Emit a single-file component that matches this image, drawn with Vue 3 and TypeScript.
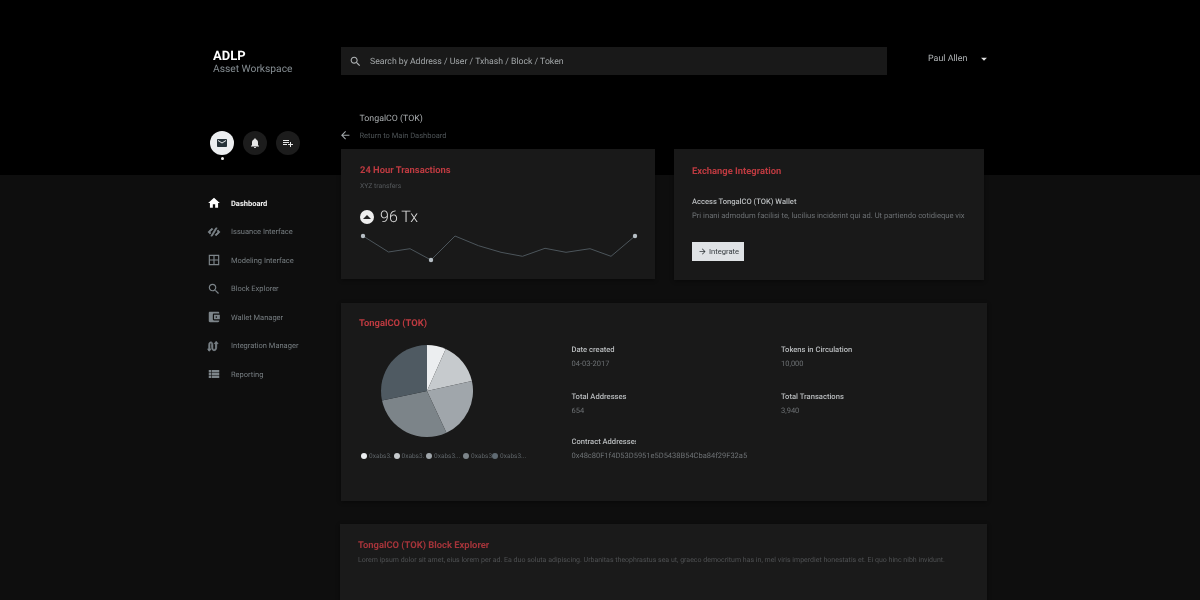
<script setup lang="ts">
const icons: Record<string, string> = {
  search: "M15.5 14h-.79l-.28-.27C15.41 12.59 16 11.11 16 9.5 16 5.91 13.09 3 9.5 3S3 5.91 3 9.5 5.91 16 9.5 16c1.61 0 3.09-.59 4.23-1.57l.27.28v.79l5 4.99L20.49 19l-4.99-5zm-6 0C7.01 14 5 11.99 5 9.5S7.01 5 9.5 5 14 7.01 14 9.5 11.99 14 9.5 14z",
  mail: "M20 4H4c-1.1 0-1.99.9-1.99 2L2 18c0 1.1.9 2 2 2h16c1.1 0 2-.9 2-2V6c0-1.1-.9-2-2-2zm0 4l-8 5-8-5V6l8 5 8-5v2z",
  bell: "M12 22c1.1 0 2-.9 2-2h-4c0 1.1.89 2 2 2zm6-6v-5c0-3.07-1.64-5.64-4.5-6.32V4c0-.83-.67-1.5-1.5-1.5s-1.5.67-1.5 1.5v.68C7.63 5.36 6 7.92 6 11v5l-2 2v1h16v-1l-2-2z",
  playlist: "M14 10H2v2h12v-2zm0-4H2v2h12V6zm4 8v-4h-2v4h-4v2h4v4h2v-4h4v-2h-4zM2 16h8v-2H2v2z",
  home: "M10 20v-6h4v6h5v-8h3L12 3 2 12h3v8z",
  issuance: "M8.5 5.5 2.8 10.6c-.9.9-.9 2 0 2.8L5 15.5l1.6-1.7L4.8 12l5.3-4.8zM15.5 18.5l5.7-5.1c.9-.9.9-2 0-2.8L19 8.5l-1.6 1.7 1.8 1.8-5.3 4.8zM15 5h2.4L9 19H6.6z",
  grid: "M3 3v18h18V3H3zm8 16H5v-6h6v6zm0-8H5V5h6v6zm8 8h-6v-6h6v6zm0-8h-6V5h6v6z",
  wallet: "M21 18v1c0 1.1-.9 2-2 2H5c-1.11 0-2-.9-2-2V5c0-1.1.89-2 2-2h14c1.1 0 2 .9 2 2v1h-9c-1.11 0-2 .9-2 2v8c0 1.1.89 2 2 2h9zm-9-2h10V8H12v8zm4-2.5c-.83 0-1.5-.67-1.5-1.5s.67-1.5 1.5-1.5 1.5.67 1.5 1.5-.67 1.5-1.5 1.5z",
  integration: "M3 20V9.5C3 6.5 4.5 5 6.5 5S10 6.5 10 9.5v5c0 2 .7 3.5 2.2 3.5s2.3-1.5 2.3-3.5V8h-2l3.2-4 3.3 4h-2.4v6.5c0 3.5-1.8 5.5-4.4 5.5S8 18 8 14.5v-5C8 8 7.5 7 6.5 7S5 8 5 9.5V17h2l-3 4-3-4h2z",
  list: "M3 14h4v-4H3v4zm0 5h4v-4H3v4zM3 9h4V5H3v4zm5 5h13v-4H8v4zm0 5h13v-4H8v4zM8 5v4h13V5H8z",
  back: "M20 11H7.83l5.59-5.59L12 4l-8 8 8 8 1.41-1.41L7.83 13H20v-2z",
  forward: "M12 4l-1.41 1.41L16.17 11H4v2h12.17l-5.58 5.59L12 20l8-8z",
  drop: "M7 10l5 5 5-5z",
}

const actions = [
  { icon: "mail", active: true },
  { icon: "bell", active: false },
  { icon: "playlist", active: false },
]

const navItems = [
  { label: "Dashboard", icon: "home", active: true, heavy: false },
  { label: "Issuance Interface", icon: "issuance", active: false, heavy: true },
  { label: "Modeling Interface", icon: "grid", active: false, heavy: false },
  { label: "Block Explorer", icon: "search", active: false, heavy: false },
  { label: "Wallet Manager", icon: "wallet", active: false, heavy: false },
  { label: "Integration Manager", icon: "integration", active: false, heavy: true },
  { label: "Reporting", icon: "list", active: false, heavy: false },
]

const sparkPoints: [number, number][] = [
  [3, 3], [28.5, 19], [50, 15.7], [71, 27], [95, 3], [118.5, 12.7], [141, 19.3],
  [162.5, 23.3], [185, 15.3], [206, 19.3], [230, 15.7], [251, 23.3], [275, 3],
]
const sparkLine = sparkPoints.map((p) => p.join(",")).join(" ")
const sparkDots = [sparkPoints[0], sparkPoints[3], sparkPoints[12]]

// pie angles in degrees, clockwise from twelve o'clock
const slices = [
  { from: 0, to: 24, color: "#eceef0" },
  { from: 24, to: 77.5, color: "#c6cacd" },
  { from: 77.5, to: 155, color: "#a0a6ab" },
  { from: 155, to: 258, color: "#7c8489" },
  { from: 258, to: 360, color: "#4f5a62" },
]

const slicePath = (from: number, to: number) => {
  const r = 46
  const pt = (a: number) => {
    const rad = (a * Math.PI) / 180
    return `${(r + r * Math.sin(rad)).toFixed(2)} ${(r - r * Math.cos(rad)).toFixed(2)}`
  }
  return `M${r} ${r}L${pt(from)}A${r} ${r} 0 ${to - from > 180 ? 1 : 0} 1 ${pt(to)}Z`
}

const legend = [
  { label: "0xabs3.", color: "#eceef0" },
  { label: "0xabs3.", color: "#c6cacd" },
  { label: "0xabs3...", color: "#a0a6ab" },
  { label: "0xabs3", color: "#7c8489" },
  { label: "0xabs3...", color: "#5f6a72" },
]

const details = [
  { label: "Date created", value: "04-03-2017" },
  { label: "Tokens in Circulation", value: "10,000" },
  { label: "Total Addresses", value: "654" },
  { label: "Total Transactions", value: "3,940" },
]
</script>

<template>
  <div class="page">
    <aside class="sidebar">
      <div class="brand">
        <div class="brand-name">ADLP</div>
        <div class="brand-sub">Asset Workspace</div>
      </div>
      <div class="actions">
        <button v-for="a in actions" :key="a.icon" class="action" :class="{ active: a.active }">
          <svg viewBox="0 0 24 24" width="12" height="12"><path :d="icons[a.icon]" /></svg>
        </button>
      </div>
      <nav class="nav">
        <a v-for="item in navItems" :key="item.label" class="nav-item" :class="{ active: item.active }">
          <svg :class="{ heavy: item.heavy }" viewBox="0 0 24 24" width="14" height="14"><path :d="icons[item.icon]" /></svg>
          <span>{{ item.label }}</span>
        </a>
      </nav>
    </aside>

    <main class="main">
      <header class="topbar">
        <div class="search">
          <svg viewBox="0 0 24 24" width="13" height="13"><path :d="icons.search" /></svg>
          <span>Search by Address / User / Txhash / Block / Token</span>
        </div>
        <div class="user">
          <span>Paul Allen</span>
          <svg viewBox="0 0 24 24" width="14" height="14"><path :d="icons.drop" /></svg>
        </div>
      </header>

      <div class="crumb">
        <svg viewBox="0 0 24 24" width="12.5" height="12.5"><path :d="icons.back" /></svg>
        <div class="crumb-text">
          <div class="crumb-title">TongalCO (TOK)</div>
          <div class="crumb-sub">Return to Main Dashboard</div>
        </div>
      </div>

      <div class="row">
        <section class="card tx-card">
          <h2 class="card-title">24 Hour Transactions</h2>
          <p class="muted">XYZ transfers</p>
          <div class="stat">
            <span class="stat-icon"><i></i></span>
            <span class="stat-value">96 Tx</span>
          </div>
          <svg class="spark" viewBox="0 0 278 30" width="278" height="30">
            <polyline :points="sparkLine" fill="none" stroke="#4c555b" stroke-width="1" />
            <circle v-for="d in sparkDots" :key="d[0]" :cx="d[0]" :cy="d[1]" r="2.2" fill="#b6bec4" />
          </svg>
        </section>

        <section class="card exchange-card">
          <h2 class="card-title">Exchange Integration</h2>
          <h3 class="label wallet-label">Access TongalCO (TOK) Wallet</h3>
          <p class="desc">Pri inani admodum facilisi te, lucilius inciderint qui ad. Ut partiendo cotidieque vix</p>
          <button class="integrate">
            <svg viewBox="0 0 24 24" width="9" height="9"><path :d="icons.forward" /></svg>
            <span>Integrate</span>
          </button>
        </section>
      </div>

      <section class="card token-card">
        <div class="token-left">
          <h2 class="card-title">TongalCO (TOK)</h2>
          <svg class="pie" viewBox="0 0 92 92" width="92" height="92">
            <path v-for="s in slices" :key="s.from" :d="slicePath(s.from, s.to)" :fill="s.color" />
          </svg>
          <ul class="legend">
            <li v-for="(l, i) in legend" :key="i">
              <i :style="{ background: l.color }"></i>
              <span>{{ l.label }}</span>
            </li>
          </ul>
        </div>
        <div class="details">
          <div v-for="d in details" :key="d.label" class="detail">
            <div class="label">{{ d.label }}</div>
            <div class="value">{{ d.value }}</div>
          </div>
          <div class="detail contract">
            <div class="label clipped">Contract Addresses</div>
            <div class="value">0x48c80F1f4D53D5951e5D5438B54Cba84f29F32a5</div>
          </div>
        </div>
      </section>

      <section class="card explorer-card">
        <h2 class="card-title">TongalCO (TOK) Block Explorer</h2>
        <p class="lorem">Lorem ipsum dolor sit amet, eius lorem per ad. Ea duo soluta adipiscing. Urbanitas theophrastus sea ut, graeco democritum has in, mel viris imperdiet honestatis et. Ei quo hinc nibh invidunt.</p>
      </section>
    </main>
  </div>
</template>

<style>
html,
body {
  background: #0e0e0e;
  overflow: hidden;
}
</style>

<style scoped>
.page {
  display: grid;
  grid-template-columns: 132px 646px;
  height: 600px;
  padding-left: 209px;
  overflow: hidden;
  box-sizing: border-box;
  background: linear-gradient(#000 0 175px, #0e0e0e 175px);
  font-family: Roboto, "Liberation Sans", sans-serif;
  text-rendering: geometricPrecision;
  color: #ccc;
  filter: blur(0.3px);
}

svg {
  display: block;
  flex: none;
  fill: currentColor;
}

h2,
h3,
p,
ul {
  margin: 0;
  padding: 0;
}

.brand {
  padding: 48.5px 0 0 4px;
}

.brand-name {
  font-size: 13px;
  line-height: 15px;
  font-weight: 700;
  color: #fff;
}

.brand-sub {
  margin-top: -1px;
  font-size: 10.25px;
  line-height: 12px;
  color: #858d92;
}

.actions {
  display: flex;
  gap: 9px;
  margin: 56.5px 0 0 1px;
}

.action {
  position: relative;
  display: flex;
  align-items: center;
  justify-content: center;
  width: 24px;
  height: 24px;
  padding: 0;
  border: 0;
  border-radius: 50%;
  background: #1c1c1c;
  color: #e8e8e8;
}

.action.active {
  background: #eceef0;
  color: #263238;
}

.action.active::after {
  content: "";
  position: absolute;
  left: 10.5px;
  top: 26px;
  width: 3px;
  height: 3px;
  border-radius: 50%;
  background: #eee;
}

.nav {
  display: flex;
  flex-direction: column;
  margin: 34px 0 0 -2px;
}

.nav-item {
  display: flex;
  align-items: center;
  gap: 10px;
  height: 28.5px;
  font-size: 7.5px;
  color: #777e82;
}

.nav-item svg {
  color: #7c8489;
}

.nav-item svg.heavy path {
  stroke: currentColor;
  stroke-width: 1.3;
}

.nav-item.active {
  font-weight: 700;
  color: #f2f2f2;
}

.nav-item.active svg {
  color: #fff;
}

.topbar {
  display: flex;
  align-items: center;
  padding-top: 47px;
}

.search {
  display: flex;
  flex: none;
  align-items: center;
  gap: 8px;
  width: 546px;
  height: 28px;
  padding: 1px 0 0 8px;
  box-sizing: border-box;
  background: #191919;
  font-size: 8.7px;
  color: #a2a6a8;
}

.search svg {
  color: #b0b4b6;
  margin-top: -1px;
}

.user {
  display: flex;
  flex: none;
  align-items: center;
  gap: 10px;
  margin: -5px 0 0 41px;
  font-size: 8.9px;
  color: #b0b4b6;
  white-space: nowrap;
}

.user svg {
  color: #e0e0e0;
}

.crumb {
  display: flex;
  align-items: flex-end;
  gap: 8px;
  height: 74px;
  padding-bottom: 8px;
  box-sizing: border-box;
}

.crumb-title {
  font-size: 8.8px;
  line-height: 11px;
  margin-bottom: 6px;
  color: #a8acae;
}

.crumb-sub {
  font-size: 7.5px;
  line-height: 10px;
  color: #4e5457;
}

.crumb svg {
  color: #a0a6a9;
  margin: 0 0 0 -2px;
}

.card {
  background: #191919;
  box-shadow: 0 1px 4px rgba(0, 0, 0, 0.4);
  box-sizing: border-box;
}

.card-title {
  font-size: 9.4px;
  line-height: 14px;
  font-weight: 700;
  color: #bd3a40;
}

.row {
  display: flex;
  gap: 19px;
}

.tx-card {
  width: 314px;
  height: 130px;
  padding: 15px 0 0 19px;
}

.muted {
  margin-top: 3px;
  font-size: 6.8px;
  line-height: 10px;
  color: #55595c;
}

.stat {
  display: flex;
  align-items: center;
  gap: 6px;
  margin-top: 16px;
}

.stat-icon {
  display: flex;
  align-items: center;
  justify-content: center;
  width: 14px;
  height: 14px;
  border-radius: 50%;
  background: #eee;
}

.stat-icon i {
  width: 0;
  height: 0;
  border: 4px solid transparent;
  border-top: 0;
  border-bottom: 4px solid #222;
}

.stat-value {
  font-size: 16px;
  line-height: 20px;
  font-weight: 300;
  color: #dcdcdc;
}

.spark {
  margin: 6px 0 0 0;
}

.exchange-card {
  width: 310px;
  height: 131px;
  padding: 16px 0 0 18px;
}

.label {
  font-size: 7.6px;
  line-height: 10px;
  font-weight: 500;
  color: #b8bbbd;
}

.wallet-label {
  margin-top: 18px;
}

.desc {
  margin-top: 4px;
  font-size: 7.6px;
  line-height: 10px;
  color: #6d7174;
}

.integrate {
  display: flex;
  align-items: center;
  gap: 2px;
  width: 52px;
  height: 19px;
  margin-top: 21px;
  padding: 0 0 0 6px;
  border: 0;
  background: #dfe2e5;
  font-family: inherit;
  font-size: 7.6px;
  color: #33393d;
}

.token-card {
  display: flex;
  width: 646px;
  height: 198px;
  margin-top: 23px;
  padding: 14px 0 0 18px;
}

.token-left {
  flex: none;
  width: 212.5px;
}

.pie {
  margin: 14px 0 0 22px;
}

.legend {
  display: grid;
  grid-template-columns: 32.5px 32.5px 37px 29px auto;
  margin: 15px 0 0 2px;
  list-style: none;
}

.legend li {
  display: flex;
  align-items: center;
  gap: 2px;
  font-size: 6.5px;
  color: #5f6569;
  white-space: nowrap;
}

.legend i {
  flex: none;
  width: 6px;
  height: 6px;
  border-radius: 50%;
}

.details {
  display: grid;
  grid-template-columns: 209.5px auto;
  grid-auto-rows: 47px;
  padding-top: 28px;
}

.value {
  margin-top: 4px;
  font-size: 7.5px;
  line-height: 10px;
  color: #6d7174;
}

.contract {
  grid-column: 1 / -1;
  margin-top: -2px;
}

.clipped {
  width: 64px;
  overflow: hidden;
  white-space: nowrap;
}

.explorer-card {
  width: 647px;
  height: 120px;
  margin: 23px 0 0 -1px;
  padding: 15px 0 0 18px;
  background: #1a1a1a;
}

.explorer-card .card-title {
  color: #a5343a;
}

.lorem {
  margin-top: 2px;
  font-size: 7px;
  line-height: 10px;
  color: #4f5153;
}
</style>
